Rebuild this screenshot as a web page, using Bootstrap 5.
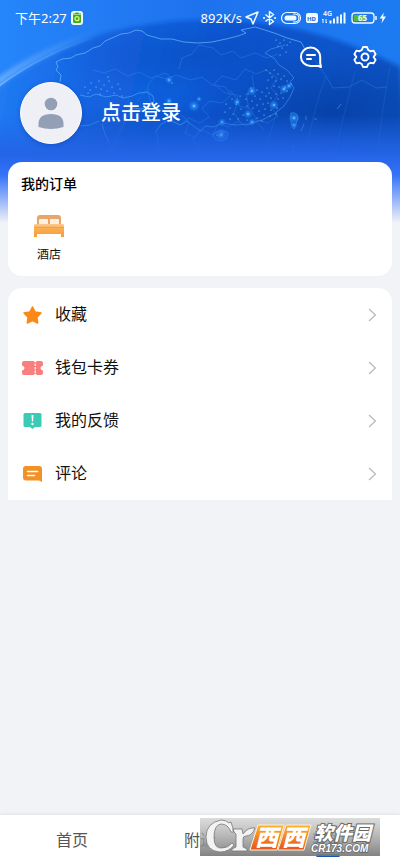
<!DOCTYPE html>
<html lang="zh-CN">
<head>
<meta charset="utf-8">
<meta name="viewport" content="width=device-width, initial-scale=1">
<title>我的</title>
<link href="https://cdn.jsdelivr.net/npm/bootstrap@5.3.0/dist/css/bootstrap.min.css" rel="stylesheet">
<style>
  body { background: #f2f3f7; font-family: Roboto, "Noto Sans CJK SC", sans-serif; color: #111; }
  svg { display: block; flex-shrink: 0; }
  .backdrop { height: 230px; z-index: 0; }
  .status-bar { height: 36px; padding: 0 15px; font: 400 13px/18px "Noto Sans", "Noto Sans CJK SC", sans-serif; }
  .toolbar { height: 46px; padding: 0 22px 4px; gap: 28px; }
  .profile { padding: 0 20px; margin-bottom: 18px; gap: 19px; }
  .avatar { width: 62px; height: 62px; background: #eff0f5; border: 1px solid #fff; box-shadow: 0 1px 4px #0738a066; }
  .login { font-size: 20px; line-height: 28px; font-weight: 500; }
  .panel { border-radius: 14px; }
  .orders { padding: 11px 13px 10px; height: 114px; }
  .orders h2 { font-size: 14px; line-height: 22px; font-weight: 500; color: #000; }
  .order-item { width: 56px; margin-top: 20px; font-size: 12px; line-height: 18px; gap: 8px; }
  .menu { margin-top: 12px; }
  .menu-row { height: 53px; padding: 0 15px 0 14px; font-size: 16px; line-height: 24px; gap: 12px; }
  .tabs { height: 51px; padding: 0 8px; box-shadow: 0 -1px 3px #00000012; font-size: 16px; line-height: 24px; }
  .tabs a { color: #555; padding-top: 14px; }
  .tabs a.current { color: #1c5dbb; }
  .tabs a.current::after { content: ""; width: 24px; height: 3px; margin-top: 1px; background: #1556b0; border-radius: 2px; }
  .stamp { right: 20px; bottom: 10px; width: 180px; height: 38px; }
</style>
</head>
<body>
<div class="position-relative d-flex flex-column min-vh-100 overflow-hidden">

  <svg class="backdrop position-absolute top-0 start-0 w-100" viewBox="0 0 400 230" preserveAspectRatio="none" aria-hidden="true">
    <defs>
      <linearGradient id="sky" x1="0" y1="0" x2="1" y2="0"><stop offset="0" stop-color="#2585fa"/><stop offset=".5" stop-color="#1f72ee"/><stop offset="1" stop-color="#1c7bf2"/></linearGradient>
      <linearGradient id="globe" x1="0" y1="0" x2="1" y2=".1"><stop offset="0" stop-color="#2380f7"/><stop offset=".25" stop-color="#1564e2"/><stop offset=".6" stop-color="#0a56d2"/><stop offset="1" stop-color="#0d52c2"/></linearGradient>
      <radialGradient id="deep" cx=".5" cy=".5" r=".5"><stop offset="0" stop-color="#033899" stop-opacity=".65"/><stop offset="1" stop-color="#033899" stop-opacity="0"/></radialGradient>
      <radialGradient id="city"><stop offset="0" stop-color="#a5e5ff"/><stop offset=".3" stop-color="#38a4ff" stop-opacity=".6"/><stop offset="1" stop-color="#168cff" stop-opacity="0"/></radialGradient>
      <linearGradient id="fade" x1="0" y1="0" x2="0" y2="1"><stop offset="0" stop-color="#2464e6" stop-opacity="0"/><stop offset=".35" stop-color="#2464e6"/><stop offset=".52" stop-color="#3472fa"/><stop offset=".94" stop-color="#f2f3f7"/><stop offset="1" stop-color="#f2f3f7"/></linearGradient>
      <linearGradient id="rim" gradientUnits="userSpaceOnUse" x1="0" y1="0" x2="100" y2="0"><stop offset="0" stop-color="#a9d4ff" stop-opacity=".5"/><stop offset=".5" stop-color="#7bb7ff" stop-opacity=".3"/><stop offset="1" stop-color="#7bb7ff" stop-opacity="0"/></linearGradient>
      <filter id="soft"><feGaussianBlur stdDeviation="2"/></filter>
    </defs>
    <rect width="400" height="230" fill="url(#sky)"/>
    <path d="M-5 90Q70 34 150 24Q280 5 400 67L410 230H-5Z" fill="url(#globe)" filter="url(#soft)"/>
    <path d="M-5 84Q36 52 100 33" fill="none" stroke="url(#rim)" stroke-width="7" filter="url(#soft)"/>
    <path d="M-5 89Q38 56 92 38" fill="none" stroke="url(#rim)" stroke-width="1.500"/>
    <ellipse cx="330" cy="112" rx="150" ry="60" fill="url(#deep)"/>
    <ellipse cx="150" cy="135" rx="130" ry="34" fill="url(#deep)" opacity=".5"/>
    <ellipse cx="200" cy="56" rx="150" ry="36" fill="url(#deep)" opacity=".4"/>
    <g fill="none" stroke="#4eb0ff" stroke-width=".8" stroke-linejoin="round">
      <path d="M60 82l1-7-5-5 2-3-2-5 6-3 9-1 5-3 9-2 8-5 7-2 5-5 7-3 9-4 8-1 7-3 6 1 5 4 7 2 7 2 11 0 12 3 14 1 14-1 14-3 12-3 8-3-5-3 14-3 10 3 12 4 10 4 14 4 4 7" stroke="#7bcaff" opacity=".75"/>
      <path d="M80 95l9 2 7-3 10 3 10-2 7 3 9-2 7-3 8-1 6 4 1 5-4 6-9 2-8-1-8 4" opacity=".75"/>
      <path d="M80 126l10-1 9-4M102 124q2 10 7 18M155 133l6-9 9-4 10 5 7-4 9 7 5 3 4-5 9 1 8-4 13 2 13-1 14-4 12-6 10-8 6-9 4-9-4-6 4-4-7-8-8-5-5-7-9-5 6-4 14-4" opacity=".6"/>
      <g opacity=".3">
        <path d="M148 85l8-9 11 3 9-4 15 5 11-3 10 8 13 2 6 8-9 8-12-2-8 7 7 9-9 6-12-5-7 7-11-4-8-12-10-2-4-15zM214 84l8-8 14 4 9-11 11 5 10-4 11 8-6 10 7 7-8 11 8 10-10 7-12-3-5-11-12-3-2-11-12-2zM179 69l3-11 10-4 7-9 14 3 8 7 12-4 8 7 14-5 12 5 11-4M93 70l11 3 11-4 13 7 11-4 12 6 14-5 8 5"/>
        <path d="M182 115l7 8-4 10 9 4 8-7 11 5 5-11 11 3 9-6 8 5 10-4 8 7M230 90l8 11-4 12 7 10M252 75l2 13-8 6 3 15M200 130l-7 10 9 12 7 8M157 133l1 12 8 7-1 12M111 147l3 14M315 60l12 18 6 10 16-1 13-7 14 8 11-1"/>
        <path d="M148 88Q122 116 110 158M326 76q-12 30-22 85M355 71q-9 35-22 90M390 67q-8 40-13 95M278 108q-9 28-15 52" opacity=".6"/>
      </g>
      <path d="M291 113q6-1 7 5l-4 11q-4-4-3-16zM213 134q9-6 15-1q0 8-9 8q-6-2-6-7M301 131l3-7M292 148l2-3M306 120v-4M314 119h3M337 109l4-5" opacity=".65"/>
    </g>
    <g fill="url(#city)"><circle cx="169" cy="80" r="4"/><circle cx="169" cy="101" r="4"/><circle cx="194" cy="106" r="6"/><circle cx="199" cy="99" r="3"/><circle cx="237" cy="102" r="4"/><circle cx="248" cy="114" r="5"/><circle cx="252" cy="122" r="4"/><circle cx="274" cy="105" r="5"/><circle cx="284" cy="89" r="5"/><circle cx="289" cy="86" r="4"/><circle cx="252" cy="91" r="5"/><circle cx="221" cy="135" r="7"/><circle cx="222" cy="122" r="4"/><circle cx="294" cy="118" r="6"/><circle cx="294" cy="125" r="4"/></g>
    <path fill="none" stroke="#a1e3ff" stroke-linecap="round" stroke-width="1.200" opacity=".85" d="M85 87h.1M88 93h.1M91 83h.1M90 90h.1M96 87h.1M99 81h.1M101 89h.1M104 85h.1M107 91h.1M109 81h.1M112 87h.1M114 93h.1M118 84h.1M120 89h.1M122 96h.1M108 77h.1M100 94h.1M172 83h.1M266 70h.1M270 73h.1M274 70h.1M278 74h.1M272 77h.1M268 80h.1M276 81h.1M281 79h.1M284 76h.1M287 81h.1M291 84h.1M285 87h.1M279 87h.1M274 86h.1M267 88h.1M269 93h.1M276 94h.1M281 93h.1M287 91h.1M283 98h.1M278 99h.1M271 98h.1M266 96h.1M260 99h.1M262 92h.1M257 90h.1M255 96h.1M251 88h.1M248 94h.1M246 99h.1M252 101h.1M257 105h.1M263 104h.1M268 103h.1M265 109h.1M271 110h.1M277 108h.1M276 114h.1M270 116h.1M264 115h.1M259 111h.1M253 108h.1M247 106h.1M241 109h.1M243 115h.1M238 119h.1M233 114h.1M230 108h.1M236 104h.1M240 96h.1M232 99h.1M226 104h.1M225 112h.1M230 119h.1M247 120h.1M257 118h.1M262 121h.1M217 135h.1M222 133h.1M276 40h.1M280 43h.1M284 40h.1M287 45h.1M282 48h.1M278 46h.1M290 42h.1M286 52h.1M280 55h.1"/>
    <rect y="115" width="400" height="115" fill="url(#fade)"/>
  </svg>

  <header class="position-relative text-white">
    <div class="status-bar d-flex align-items-center">
      <span>下午2:27</span>
      <svg class="ms-1" width="13" height="14" viewBox="0 0 13 14"><rect width="12" height="14" rx="3" fill="#effff3"/><path d="M2 4h8v7q0 1-1 1H3q-1 0-1-1zM2 2.500h2L4.500 1.500h3L8 2.500h2v1H2z" fill="#45a92e"/><circle cx="6" cy="7.700" r="2" fill="none" stroke="#dcff72" stroke-width="1.200"/></svg>
      <span class="ms-auto">892K/s</span>
      <svg class="ms-1" width="139" height="18" viewBox="245 9 139 18" overflow="visible" fill="none" stroke="#effcff" aria-label="设备状态" role="img">
        <path d="M245 17l12-5-5 12-2-5z" stroke-width="1.500" stroke-linejoin="round"/>
        <path d="M264.500 14.500l8 7-4 3V11.500l4 3-8 7" stroke-width="1.500" stroke-linejoin="round"/><path d="M263 18h.1M274 18h.1" stroke-width="2" stroke-linecap="round"/>
        <path d="M286 12.500h8a5.500 5.500 0 0 1 0 11h-8a5.500 5.500 0 0 1 0-11z" stroke-width="1.200"/><rect x="283.500" y="15.500" width="12" height="5" rx="2.500" fill="#effcff" stroke="none"/><path d="M292 14h2a4 4 0 0 1 0 8h-2" stroke-width="1"/>
        <rect x="305" y="13" width="12" height="10" rx="2" fill="#effcff" stroke="none"/>
        <text x="306" y="20.500" font-size="6" font-weight="700" font-family="Noto Sans" fill="#1567dd" stroke="none">HD</text>
        <text x="322" y="16" font-size="7" font-weight="600" font-family="Noto Sans" fill="#effcff" stroke="none">4G</text>
        <path d="M322 23v-4l-1 1M325 19v4l1-1" stroke-width="1"/>
        <path d="M329.500 23.500v-3M333 23.500v-5M336.500 23.500v-7M340 23.500v-9M343.500 23.500v-11" stroke-width="2"/>
        <rect x="351" y="13" width="22" height="10" rx="3" stroke-width="1.300"/><path d="M353 15h12v6h-12z" fill="#55b83c" stroke="none"/><path d="M375 16v4" stroke-width="1.500"/>
        <text x="357" y="21" font-size="8" font-weight="700" font-family="Noto Sans" fill="#effcff" stroke="none">65</text>
        <path d="M383 12.500l-4.500 6h3l-1 5 4.500-7h-3z" fill="#effcff" stroke="none"/>
      </svg>
    </div>

    <div class="toolbar d-flex justify-content-end align-items-center">
      <button class="btn p-0 border-0 text-white" type="button" aria-label="消息">
        <svg width="26" height="24" viewBox="0 0 26 24" fill="none" stroke="currentColor" stroke-width="2" stroke-linejoin="round" stroke-linecap="round"><path d="M12.500 2.500a9.500 9.200 0 0 0 0 18.500h8l2.500 1-.8-4V12a9.500 9.500 0 0 0-9.700-9.500z"/><path d="M9 10h8M9 14h4"/></svg>
      </button>
      <button class="btn p-0 border-0 text-white" type="button" aria-label="设置">
        <svg width="26" height="24" viewBox="0 0 26 24" fill="none" stroke="currentColor" stroke-width="1.900" stroke-linejoin="round"><path d="M11 2h4l1.200 3 2.200 1.200 3.200-.6 2 3.500-2 2.900 2 2.900-2 3.500-3.200-.6-2.200 1.200L15 22h-4l-1.200-3-2.200-1.200-3.200.6-2-3.500 2-2.900-2-2.900 2-3.500 3.200.6L9.800 5z"/><circle cx="13" cy="12" r="3.500"/></svg>
      </button>
    </div>

    <a href="#login" class="profile d-flex align-items-center text-white text-decoration-none">
      <span class="avatar rounded-circle d-flex align-items-center justify-content-center">
        <svg width="26" height="34" viewBox="0 0 26 34" fill="#939eb7"><circle cx="13" cy="8" r="6.300"/><path d="M.5 31v-3Q.5 18 13 18t12.500 10v3Q19 33 13 33T.5 31z"/></svg>
      </span>
      <span class="login">点击登录</span>
    </a>
  </header>

  <main class="position-relative px-2">
    <section class="panel orders bg-white">
      <h2 class="mb-0">我的订单</h2>
      <a href="#hotel" class="order-item d-flex flex-column align-items-center text-decoration-none text-reset">
        <svg width="30" height="23" viewBox="0 0 30 23"><defs><linearGradient id="bed" x1="0" y1="0" x2="0" y2="1"><stop offset="0" stop-color="#fbc98d"/><stop offset=".4" stop-color="#fbac50"/><stop offset="1" stop-color="#fa9d32"/></linearGradient></defs><path d="M3 10V3q0-3 3-3h18q3 0 3 3v7z" fill="#e8a66b"/><rect x="5" y="4" width="9" height="6" rx="1" fill="#fff0df"/><rect x="16" y="4" width="9" height="6" rx="1" fill="#fff0df"/><path d="M1 9h28q1 0 1 2v11h-3v-3H3v3H0V11q0-2 1-2z" fill="url(#bed)"/><path d="M0 12.500h30" stroke="#f39332" stroke-width=".7"/></svg>
        <span>酒店</span>
      </a>
    </section>

    <nav class="panel menu bg-white overflow-hidden rounded-bottom-0" aria-label="个人服务">
      <a href="#favorites" class="menu-row d-flex align-items-center text-decoration-none text-reset">
        <svg width="21" height="20" viewBox="0 0 21 20"><path d="M10.500 2l2.700 5.100 5.800 1-4.100 4.200.8 5.700-5.200-2.500L5.300 18l.8-5.700L2 8.100l5.800-1z" fill="#fa8918" stroke="#fa8918" stroke-width="1.500" stroke-linejoin="round"/></svg>
        <span>收藏</span>
        <svg class="ms-auto" width="9" height="14" viewBox="0 0 9 14" fill="none" stroke="#b9b9bb" stroke-width="1.200"><path d="M1 1l6.500 6L1 13"/></svg>
      </a>
      <a href="#wallet" class="menu-row d-flex align-items-center text-decoration-none text-reset">
        <svg width="21" height="20" viewBox="0 0 21 20"><path d="M2 3h9.500l1.700 1.500L15 3h4q2 0 2 2v2.500q-2.500.5-2.500 2.500t2.500 2.500V15q0 2-2 2h-4l-1.800-1.500L11.500 17H2q-2 0-2-2v-2.500q2.500-.5 2.500-2.500T0 7.500V5q0-2 2-2z" fill="#fa7e7d"/><path d="M13.200 5.500v2.500M13.200 9v2.500M13.200 12.500v2.500" stroke="#fff" stroke-width="1.200"/></svg>
        <span>钱包卡券</span>
        <svg class="ms-auto" width="9" height="14" viewBox="0 0 9 14" fill="none" stroke="#b9b9bb" stroke-width="1.200"><path d="M1 1l6.500 6L1 13"/></svg>
      </a>
      <a href="#feedback" class="menu-row d-flex align-items-center text-decoration-none text-reset">
        <svg width="21" height="20" viewBox="0 0 21 20"><path d="M3 2h15q1.500 0 1.500 1.500v11Q19.500 16 18 16h-5l-2.500 2L8 16H3q-1.500 0-1.500-1.500v-11Q1.500 2 3 2z" fill="#3bcbb5"/><path d="M9.500 4h2l-.4 6.500H9.900z" fill="#fff"/><circle cx="10.500" cy="13" r="1.200" fill="#fff"/></svg>
        <span>我的反馈</span>
        <svg class="ms-auto" width="9" height="14" viewBox="0 0 9 14" fill="none" stroke="#b9b9bb" stroke-width="1.200"><path d="M1 1l6.500 6L1 13"/></svg>
      </a>
      <a href="#comments" class="menu-row d-flex align-items-center text-decoration-none text-reset">
        <svg width="21" height="20" viewBox="0 0 21 20"><path d="M4 2h13q3 0 3 3v13l-3-1.500H4q-3 0-3-3V5q0-3 3-3z" fill="#f39027"/><path d="M5.500 7.500h10M5.500 11.500h7" stroke="#fff" stroke-width="1.500" stroke-linecap="round"/></svg>
        <span>评论</span>
        <svg class="ms-auto" width="9" height="14" viewBox="0 0 9 14" fill="none" stroke="#b9b9bb" stroke-width="1.200"><path d="M1 1l6.500 6L1 13"/></svg>
      </a>
    </nav>
  </main>

  <nav class="tabs position-relative bg-white d-flex mt-auto" aria-label="主导航">
    <a href="#home" class="flex-fill w-100 d-flex flex-column align-items-center text-decoration-none">首页</a>
    <a href="#nearby" class="flex-fill w-100 d-flex flex-column align-items-center text-decoration-none">附近</a>
    <a href="#me" class="current flex-fill w-100 d-flex flex-column align-items-center text-decoration-none" aria-current="page">我的</a>
    <svg class="stamp position-absolute pe-none" viewBox="0 0 180 38" role="img" aria-label="西西软件园 CR173.COM">
      <defs>
        <linearGradient id="plate" x1="0" y1="0" x2="0" y2="1"><stop offset="0" stop-color="#c9c9c9" stop-opacity=".65"/><stop offset="1" stop-color="#777" stop-opacity=".92"/></linearGradient>
        <linearGradient id="flame" x1="0" y1="0" x2="0" y2="1"><stop offset="0" stop-color="#ffb326"/><stop offset="1" stop-color="#e9521c"/></linearGradient>
      </defs>
      <rect width="180" height="38" fill="url(#plate)"/>
      <path d="M31 4l3 10h-3Q28 6 21 6q-7 1-7 13t8 11q6 0 10-5l2 2q-5 7-14 7Q6 33 6 19T21 2q5 0 8 3zM33 11h9l1 5q5-7 12-6-3 8-9 8-3 0-3 3v8l4 2v2H32v-2l4-2V16l-3-3z" fill="#f3f3f3" stroke="#777" stroke-width=".8"/>
      <path d="M58 7h26l-7 25H50zM86 7h25l-7 25H78z" fill="url(#flame)" stroke="#fff1d8"/>
      <g font-family="Noto Sans CJK SC" font-weight="900" font-style="italic" fill="#fff">
        <text x="55" y="28" font-size="23">西</text><text x="82" y="28" font-size="23">西</text>
        <text x="114" y="22" font-size="19" stroke="#666" stroke-width="2" paint-order="stroke">软件园</text>
      </g>
      <text x="111" y="34" font-family="Liberation Sans" font-size="10" font-weight="700" font-style="italic" fill="#fff" stroke="#666" stroke-width="1.500" paint-order="stroke">CR173.COM</text>
    </svg>
  </nav>
</div>
<script src="https://cdn.jsdelivr.net/npm/bootstrap@5.3.0/dist/js/bootstrap.bundle.min.js"></script>
</body>
</html>
